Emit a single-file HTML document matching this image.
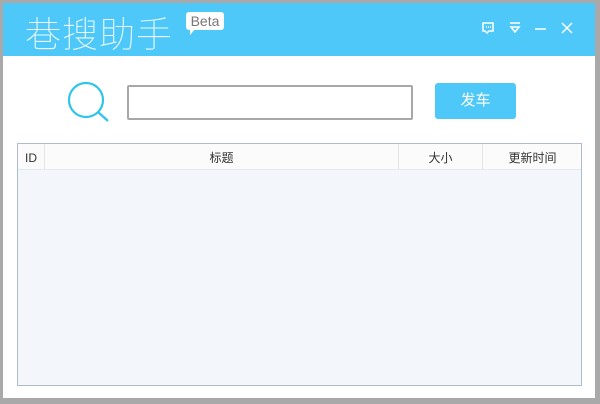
<!DOCTYPE html><html><head><meta charset="utf-8"><style>
body{margin:0;width:600px;height:404px;background:#a9a9a9;position:relative;overflow:hidden;font-family:"Liberation Sans","Noto Sans CJK SC",sans-serif}
.win{position:absolute;left:3px;top:3px;width:592px;height:395px;background:#fff}
.hd{position:absolute;left:0;top:0;width:592px;height:53px;background:#4ec8f8}
.title{position:absolute;left:22px;top:3px;color:#fff;font-size:36px;font-weight:100;letter-spacing:1px;font-family:"Noto Sans CJK SC",sans-serif;opacity:.92}
.beta{position:absolute;left:183px;top:9px;width:38px;height:18px;background:#fff;border-radius:3px;color:#777;font-size:14px;line-height:18px;text-align:center}
.inp{position:absolute;left:124px;top:82px;width:282px;height:31px;border:2px solid #a8a8a8;border-radius:2px}
.btn{position:absolute;left:432px;top:80px;width:81px;height:36px;background:#4ec8f8;border-radius:3px;color:#fff;font-size:15px;line-height:36px;text-align:center}
.tb{position:absolute;left:14px;top:140px;width:563px;height:241px;border:1px solid #b0bccc;background:#f3f7fb}
.th{position:absolute;left:0;top:0;width:563px;height:25px;background:#fbfbfb;border-bottom:1px solid #e4e9f0;font-size:12px;color:#333;line-height:28px}
.th span{position:absolute;top:0;height:25px;text-align:center}
.sep{border-left:1px solid #e4e4e4}
</style></head><body><div class="win">
<div class="hd"><div class="title">巷搜助手</div><div class="beta">Beta</div>
<svg style="position:absolute;left:185px;top:26px" width="8" height="7"><path d="M2 0 L2 6 L7 0Z" fill="#fff"/></svg>
<svg style="position:absolute;left:475px;top:16px" width="110" height="20" fill="none" stroke="#fff" stroke-width="1.5">
<path d="M5 4 H15 V12 H11 L9 14 L7 12 H5Z"/><path d="M8 8h1M10 8h1M12 8h1"/>
<path d="M32 4 H42 M33 8 H41 L37 13Z"/>
<path d="M57 10 H68"/>
<path d="M84 4 L94 14 M94 4 L84 14"/></svg></div>
<svg style="position:absolute;left:62px;top:77px" width="50" height="50" fill="none" stroke="#2ec5ea" stroke-width="2.2"><circle cx="21" cy="20" r="17"/><path d="M33 32 L43 41"/></svg>
<div class="inp"></div><div class="btn">发车</div>
<div class="tb"><div class="th">
<span style="left:0;width:26px">ID</span>
<span class="sep" style="left:26px;width:353px">标题</span>
<span class="sep" style="left:380px;width:83px">大小</span>
<span class="sep" style="left:464px;width:99px">更新时间</span>
</div></div>
</div></body></html>
